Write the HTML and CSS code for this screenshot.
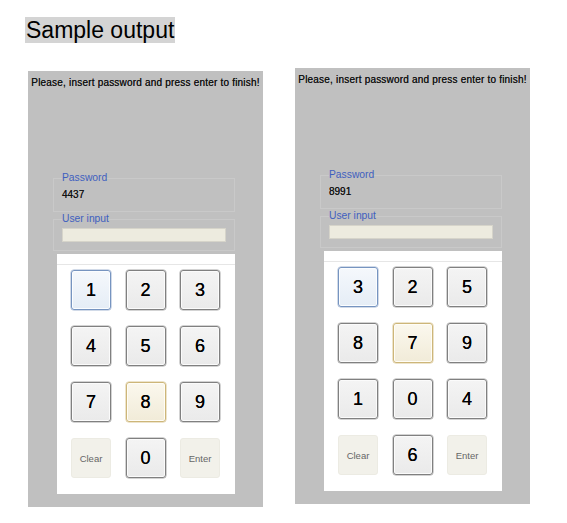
FILE: index.html
```html
<!DOCTYPE html>
<html>
<head>
<meta charset="utf-8">
<link rel="stylesheet" href="styles.css">
</head>
<body>
<div class="title"><span class="title-text">Sample output</span></div>
<div class="shots">
  <div class="panel panel-left">
    <p class="message">Please, insert password and press enter to finish!</p>
    <fieldset class="group">
      <legend class="legend">Password</legend>
      <div class="value">4437</div>
    </fieldset>
    <fieldset class="group group-input">
      <legend class="legend">User input</legend>
      <div class="input"></div>
    </fieldset>
    <div class="keypad">
      <div class="strip"></div>
      <div class="keys">
        <button class="key key-focus">1</button>
        <button class="key">2</button>
        <button class="key">3</button>
        <button class="key">4</button>
        <button class="key">5</button>
        <button class="key">6</button>
        <button class="key">7</button>
        <button class="key key-hover">8</button>
        <button class="key">9</button>
        <button class="key key-action">Clear</button>
        <button class="key">0</button>
        <button class="key key-action">Enter</button>
      </div>
    </div>
  </div>
  <div class="panel panel-right">
    <p class="message">Please, insert password and press enter to finish!</p>
    <fieldset class="group">
      <legend class="legend">Password</legend>
      <div class="value">8991</div>
    </fieldset>
    <fieldset class="group group-input">
      <legend class="legend">User input</legend>
      <div class="input"></div>
    </fieldset>
    <div class="keypad">
      <div class="strip"></div>
      <div class="keys">
        <button class="key key-focus">3</button>
        <button class="key">2</button>
        <button class="key">5</button>
        <button class="key">8</button>
        <button class="key key-hover">7</button>
        <button class="key">9</button>
        <button class="key">1</button>
        <button class="key">0</button>
        <button class="key">4</button>
        <button class="key key-action">Clear</button>
        <button class="key">6</button>
        <button class="key key-action">Enter</button>
      </div>
    </div>
  </div>
</div>
</body>
</html>
```
FILE: styles.css
```css
html, body {
  margin: 0;
  padding: 0;
  background: #ffffff;
  font-family: "Liberation Sans", Arial, sans-serif;
}

.title {
  padding-left: 25px;
  margin-top: 17px;
  height: 26px;
}

.title-text {
  font-size: 23px;
  line-height: 26px;
  background: #d4d4d4;
  color: #000;
  padding: 0 1px;
  display: inline-block;
}

.shots {
  display: flex;
  align-items: flex-start;
  gap: 32px;
  margin-top: 25px;
  padding-left: 28px;
}

.panel {
  width: 235px;
  height: 436px;
  background: #c0c0c0;
  box-sizing: border-box;
  display: flex;
  flex-direction: column;
  padding-top: 6px;
}

.panel-left {
  margin-top: 3px;
}

.message {
  margin: 0;
  font-size: 10px;
  line-height: 12px;
  letter-spacing: 0.2px;
  color: #111111;
  text-shadow: 0 0 0.5px #333;
  text-align: center;
  white-space: nowrap;
}

.group {
  margin: 83px 0 0 25px;
  width: 182px;
  box-sizing: border-box;
  border: 1px solid #c9c9c9;
  padding: 5px 8px 10px;
  min-width: 0;
}

.group-input {
  margin-top: 1px;
  padding: 3px 8px 8px;
}

.legend {
  padding: 0;
  font-size: 10.3px;
  line-height: 12px;
  color: #3f5fbf;
}

.value {
  font-size: 10px;
  line-height: 12px;
  color: #111111;
  text-shadow: 0 0 0.5px #333;
}

.input {
  height: 14px;
  width: 164px;
  box-sizing: border-box;
  background: #edebdf;
  border: 1px solid #d6d4ca;
}

.keypad {
  margin: 3px 0 0 29px;
  width: 178px;
  height: 240px;
  background: #ffffff;
  box-sizing: border-box;
}

.strip {
  height: 10px;
  border-bottom: 1px solid #e6e6e6;
}

.keys {
  display: grid;
  grid-template-columns: repeat(3, 40px);
  grid-auto-rows: 40px;
  column-gap: 14.5px;
  row-gap: 16px;
  padding: 5px 15px 0 14px;
}

.key {
  margin: 0;
  padding: 0;
  width: 40px;
  height: 40px;
  box-sizing: border-box;
  border: 1px solid #808080;
  border-radius: 3px;
  background: linear-gradient(#f4f4f4, #eaeaea);
  box-shadow: inset 0 0 0 1px #fbfbfb, 0 0 0 0.5px #a8a8a8;
  font-family: "Liberation Sans", Arial, sans-serif;
  font-size: 18px;
  color: #000000;
  text-shadow: 0 0 0.6px #000;
  display: flex;
  align-items: center;
  justify-content: center;
}

.key-focus {
  border-color: #7694c0;
  background: linear-gradient(#f5f8fc, #e5edf6);
  box-shadow: inset 0 0 0 1px #fbfdff, 0 0 0 0.5px #a4b6d2;
}

.key-hover {
  border-color: #cdb679;
  background: linear-gradient(#fbf8ee, #f1ebd8);
  box-shadow: inset 0 0 0 1px #fffdf6, 0 0 0 0.5px #dcc99a;
}

.key-action {
  border-color: #ecebe3;
  background: #f2f1ea;
  box-shadow: none;
  font-size: 9.5px;
  color: #666666;
  text-shadow: none;
}
```
